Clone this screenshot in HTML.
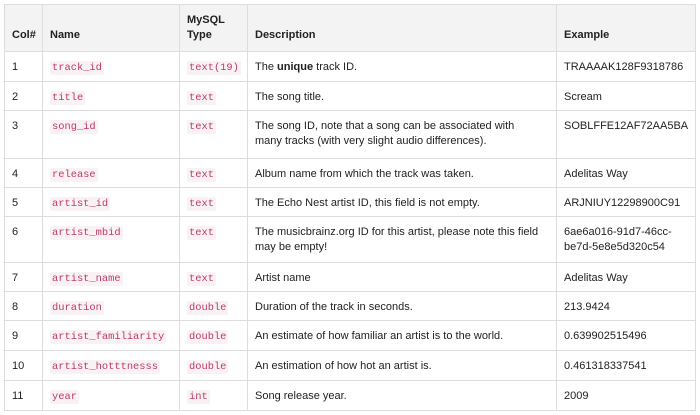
<!DOCTYPE html>
<html><head><style>
body{margin:0;background:#fff;font-family:"Liberation Sans",sans-serif;color:#222}
table{position:absolute;left:4px;top:4px;border-collapse:collapse;table-layout:fixed;width:691px}
td,th{border:1px solid #ddd;padding:0 7px;vertical-align:top;text-align:left;line-height:15px;font-size:11px}
th{background:#f3f3f3;font-weight:bold;vertical-align:bottom;padding-bottom:8px}
td{padding-top:8px;padding-bottom:0}
code{font-family:"Liberation Mono",monospace;color:#c03a62;background:#f9f2f4;padding:1px 2px;border-radius:2px;font-size:10.4px}
</style></head><body>
<table>
<colgroup><col style="width:38px"><col style="width:137px"><col style="width:68px"><col style="width:309px"><col style="width:139px"></colgroup>
<tr style="height:47px"><th>Col#</th><th>Name</th><th>MySQL<br>Type</th><th>Description</th><th>Example</th></tr>
<tr style="height:30px"><td>1</td><td><code>track_id</code></td><td><code>text(19)</code></td><td>The <b>unique</b> track ID.</td><td>TRAAAAK128F9318786</td></tr>
<tr style="height:29px"><td>2</td><td><code>title</code></td><td><code>text</code></td><td>The song title.</td><td>Scream</td></tr>
<tr style="height:48px"><td>3</td><td><code>song_id</code></td><td><code>text</code></td><td>The song ID, note that a song can be associated with<br>many tracks (with very slight audio differences).</td><td>SOBLFFE12AF72AA5BA</td></tr>
<tr style="height:29px"><td>4</td><td><code>release</code></td><td><code>text</code></td><td>Album name from which the track was taken.</td><td>Adelitas Way</td></tr>
<tr style="height:29px"><td>5</td><td><code>artist_id</code></td><td><code>text</code></td><td>The Echo Nest artist ID, this field is not empty.</td><td>ARJNIUY12298900C91</td></tr>
<tr style="height:46px"><td>6</td><td><code>artist_mbid</code></td><td><code>text</code></td><td>The musicbrainz.org ID for this artist, please note this field<br>may be empty!</td><td>6ae6a016-91d7-46cc-<br>be7d-5e8e5d320c54</td></tr>
<tr style="height:29px"><td>7</td><td><code>artist_name</code></td><td><code>text</code></td><td>Artist name</td><td>Adelitas Way</td></tr>
<tr style="height:29px"><td>8</td><td><code>duration</code></td><td><code>double</code></td><td>Duration of the track in seconds.</td><td>213.9424</td></tr>
<tr style="height:30px"><td>9</td><td><code>artist_familiarity</code></td><td><code>double</code></td><td>An estimate of how familiar an artist is to the world.</td><td>0.639902515496</td></tr>
<tr style="height:30px"><td>10</td><td><code>artist_hotttnesss</code></td><td><code>double</code></td><td>An estimation of how hot an artist is.</td><td>0.461318337541</td></tr>
<tr style="height:30px"><td>11</td><td><code>year</code></td><td><code>int</code></td><td>Song release year.</td><td>2009</td></tr>
</table>
</body></html>
